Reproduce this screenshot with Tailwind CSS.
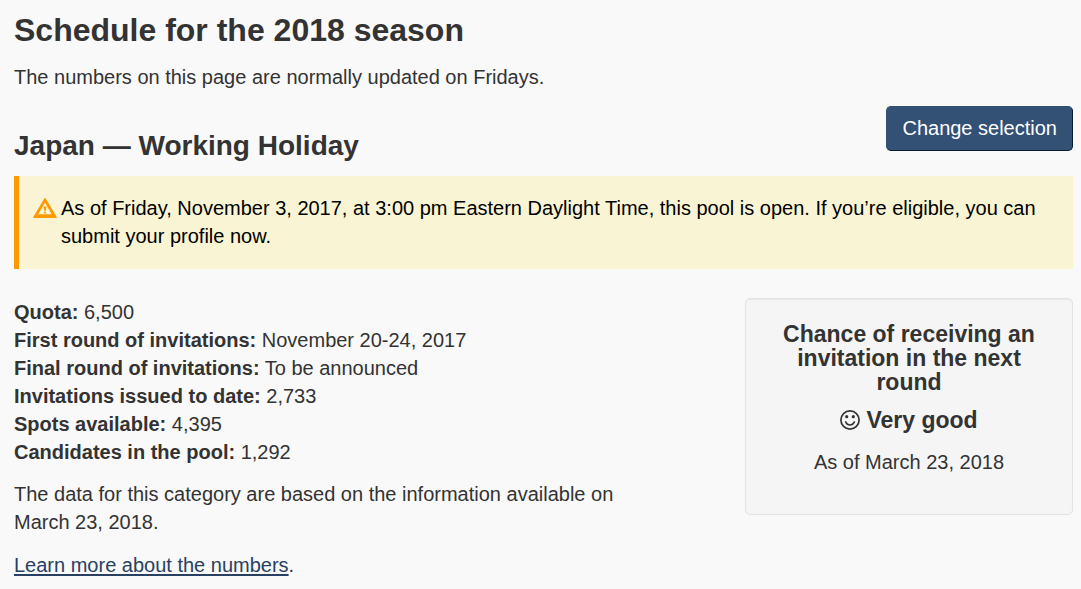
<!DOCTYPE html>
<html lang="en">
<head>
<meta charset="utf-8">
<meta name="viewport" content="width=device-width, initial-scale=1">
<title>Schedule for the 2018 season</title>
<script src="https://cdn.jsdelivr.net/npm/@tailwindcss/browser@4"></script>
</head>
<body class="bg-[#f9f9f9] font-['Liberation_Sans',Arial,sans-serif] text-[20px] leading-7 text-[#333]">
<main class="pl-[14px] pr-2 pt-3 pb-2">
  <h1 class="text-[32px] leading-9 font-bold">Schedule for the 2018 season</h1>
  <p class="mt-[15px]">The numbers on this page are normally updated on Fridays.</p>
  <div class="mt-[15px] flex items-start justify-between gap-4">
    <h2 class="pt-6 text-[28px] leading-8 font-bold">Japan — Working Holiday</h2>
    <button type="button" class="shrink-0 rounded-[5px] border border-[#335075] border-r-[#091c2d] border-b-[#091c2d] bg-[#335075] px-[15px] py-2 leading-[27px] text-white">Change selection</button>
  </div>
  <section class="mt-[14px] flex gap-1 border-l-[5px] border-[#ff9900] bg-[#f9f4d4] pt-[18px] pr-4 pb-[19px] pl-[14px] text-black">
    <svg class="mt-1 h-5 w-6 shrink-0" viewBox="0 0 24 20" aria-hidden="true">
      <path fill="#ff9900" fill-rule="evenodd" d="M11.300.5Q12 -.3 12.700.5L23.700 19Q24 20 23 20H1Q0 20 .3 19ZM12 4.800 5.200 16.300H18.800Z"/>
      <path fill="#ff9900" d="M10.400 8.500H13.600L12.600 13H11.400ZM11 13.700H13V15.300H11Z"/>
    </svg>
    <p>As of Friday, November 3, 2017, at 3:00 pm Eastern Daylight Time, this pool is open. If you’re eligible, you can submit your profile now.</p>
  </section>
  <div class="mt-[29px] flex items-start justify-between gap-8">
    <div class="max-w-[640px] flex-1">
      <ul>
        <li><strong>Quota:</strong> 6,500</li>
        <li><strong>First round of invitations:</strong> November 20-24, 2017</li>
        <li><strong>Final round of invitations:</strong> To be announced</li>
        <li><strong>Invitations issued to date:</strong> 2,733</li>
        <li><strong>Spots available:</strong> 4,395</li>
        <li><strong>Candidates in the pool:</strong> 1,292</li>
      </ul>
      <p class="mt-[14px]">The data for this category are based on the information available on March 23, 2018.</p>
      <p class="mt-[15px]"><a href="#numbers" class="text-[#284162] underline decoration-2 underline-offset-2">Learn more about the numbers</a>.</p>
    </div>
    <aside class="w-[328px] shrink-0 rounded-[5px] border border-[#e3e3e3] bg-[#f5f5f5] px-8 pt-[23px] pb-[38px] text-center shadow-[inset_0_1px_1px_rgba(0,0,0,0.05)]">
      <h3 class="text-[23px] leading-6 font-bold">Chance of receiving an invitation in the next round</h3>
      <p class="mt-3 flex items-center justify-center gap-[6px] text-[23px] leading-7 font-bold">
        <svg class="h-5 w-5" viewBox="0 0 20 20" fill="none" stroke="#333" aria-hidden="true">
          <circle cx="10" cy="10" r="9.100" stroke-width="1.700"/>
          <path stroke-width="1.700" stroke-linecap="round" d="M5.700 12Q7 15 10 15T14.300 12"/>
          <circle cx="6.700" cy="6.700" r="1.600" fill="#333" stroke="none"/>
          <circle cx="13.300" cy="6.700" r="1.600" fill="#333" stroke="none"/>
        </svg>
        <span>Very good</span>
      </p>
      <p class="mt-[14px]">As of March 23, 2018</p>
    </aside>
  </div>
</main>
</body>
</html>
